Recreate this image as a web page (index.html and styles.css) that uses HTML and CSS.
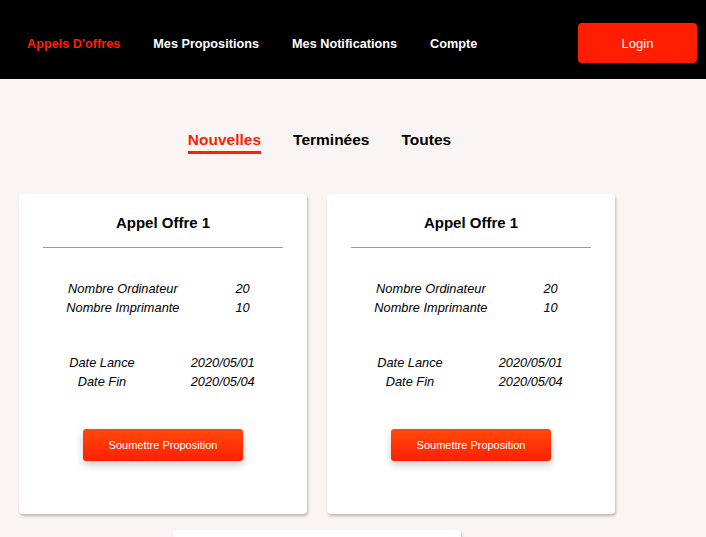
FILE: index.html
```html
<!DOCTYPE html>
<html lang="fr">
<head>
<meta charset="utf-8">
<title>Appels D'offres</title>
<link rel="stylesheet" href="styles.css">
</head>
<body>
<header class="topbar">
  <nav class="nav">
    <a class="nav-link active" href="#">Appels D'offres</a>
    <a class="nav-link" href="#">Mes Propositions</a>
    <a class="nav-link" href="#">Mes Notifications</a>
    <a class="nav-link" href="#">Compte</a>
  </nav>
  <button class="login">Login</button>
</header>
<main class="main">
  <div class="tabs">
    <a class="tab active" href="#">Nouvelles</a>
    <a class="tab" href="#">Terminées</a>
    <a class="tab" href="#">Toutes</a>
  </div>
  <div class="cards">
    <div class="card">
      <h2 class="card-title">Appel Offre 1</h2>
      <hr class="divider">
      <div class="info info-qty">
        <span>Nombre Ordinateur</span><span>20</span>
        <span>Nombre Imprimante</span><span>10</span>
      </div>
      <div class="info info-date">
        <span>Date Lance</span><span>2020/05/01</span>
        <span>Date Fin</span><span>2020/05/04</span>
      </div>
      <button class="submit">Soumettre Proposition</button>
    </div>
    <div class="card">
      <h2 class="card-title">Appel Offre 1</h2>
      <hr class="divider">
      <div class="info info-qty">
        <span>Nombre Ordinateur</span><span>20</span>
        <span>Nombre Imprimante</span><span>10</span>
      </div>
      <div class="info info-date">
        <span>Date Lance</span><span>2020/05/01</span>
        <span>Date Fin</span><span>2020/05/04</span>
      </div>
      <button class="submit">Soumettre Proposition</button>
    </div>
    <div class="card">
      <h2 class="card-title">Appel Offre 1</h2>
      <hr class="divider">
      <div class="info info-qty">
        <span>Nombre Ordinateur</span><span>20</span>
        <span>Nombre Imprimante</span><span>10</span>
      </div>
      <div class="info info-date">
        <span>Date Lance</span><span>2020/05/01</span>
        <span>Date Fin</span><span>2020/05/04</span>
      </div>
      <button class="submit">Soumettre Proposition</button>
    </div>
  </div>
</main>
</body>
</html>
```
FILE: styles.css
```css
* { box-sizing: border-box; }
html, body { margin: 0; padding: 0; }
body {
  background: #f9f5f4;
  font-family: "Liberation Sans", Arial, sans-serif;
  color: #000;
  overflow: hidden;
}
.topbar {
  display: flex;
  align-items: center;
  height: 79px;
  padding-top: 7px;
  background: #000;
}
.nav {
  display: flex;
  gap: 33px;
  padding-left: 27px;
  padding-top: 1px;
}
.nav-link {
  color: #fff;
  font-size: 12.7px;
  font-weight: bold;
  text-decoration: none;
}
.nav-link.active { color: #ff1e00; }
.login {
  margin-left: auto;
  margin-right: 9px;
  width: 119px;
  height: 40px;
  border: none;
  border-radius: 4px;
  background: #ff1e00;
  color: #fff;
  font-family: "Liberation Sans", Arial, sans-serif;
  font-size: 13px;
}
.main {
  width: 618px;
  margin-left: 8px;
}
.tabs {
  display: flex;
  justify-content: center;
  gap: 32px;
  padding-top: 52px;
  padding-left: 5px;
}
.tab {
  color: #000;
  font-size: 15.5px;
  font-weight: bold;
  text-decoration: none;
  line-height: 18px;
  padding-bottom: 2px;
  border-bottom: 3px solid transparent;
}
.tab.active {
  color: #ff1e00;
  border-bottom-color: #ff1e00;
}
.cards {
  display: flex;
  flex-wrap: wrap;
  justify-content: center;
  gap: 16px 20px;
  margin-top: 40px;
}
.card {
  width: 288px;
  height: 320px;
  background: #fff;
  border-radius: 4px;
  box-shadow: 1px 2px 3px rgba(0, 0, 0, 0.25);
  padding: 20px 24px 0;
  display: flex;
  flex-direction: column;
  align-items: center;
}
.card-title {
  margin: 0;
  font-size: 15px;
  font-weight: bold;
  line-height: 18px;
}
.divider {
  width: 100%;
  margin: 15px 0 0;
  border: none;
  border-top: 1px solid #999;
}
.info {
  display: grid;
  grid-template-columns: auto auto;
  column-gap: 56px;
  justify-items: center;
  font-style: italic;
  font-size: 12.8px;
  line-height: 19px;
}
.info-qty {
  margin-top: 31px;
  margin-right: 10px;
}
.info-date {
  margin-top: 36px;
  margin-right: 2px;
}
.submit {
  margin-top: 38px;
  width: 160px;
  height: 32px;
  border: none;
  border-radius: 3px;
  background: linear-gradient(#ff4a0c, #ff2000);
  color: #fff;
  font-family: "Liberation Sans", Arial, sans-serif;
  font-size: 11px;
  box-shadow: 0 4px 8px rgba(0, 0, 0, 0.2);
}
```
